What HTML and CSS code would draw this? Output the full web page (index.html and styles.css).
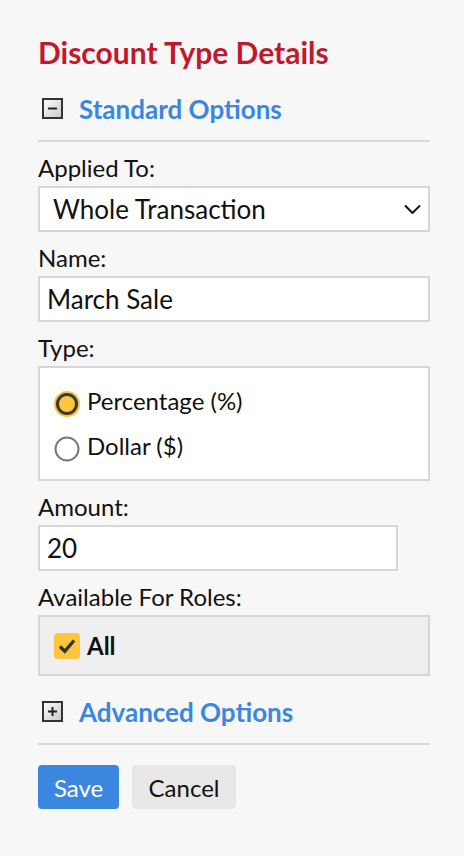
FILE: index.html
```html
<!DOCTYPE html>
<html>
<head>
<meta charset="utf-8">
<link rel="stylesheet" href="styles.css">
</head>
<body>
<div class="page">
  <h1 class="title">Discount Type Details</h1>

  <div class="section-head">
    <svg class="toggle" width="21" height="21" viewBox="0 0 21 21">
      <defs><linearGradient id="g1" x1="0" y1="0" x2="1" y2="1"><stop offset="0" stop-color="#ffffff"/><stop offset="1" stop-color="#c8c8c8"/></linearGradient></defs>
      <rect x="1" y="1" width="19" height="19" fill="url(#g1)" stroke="#333" stroke-width="2"/>
      <rect x="6" y="9.5" width="9" height="2" fill="#222"/>
    </svg>
    <span class="section-title">Standard Options</span>
  </div>
  <div class="rule"></div>

  <div class="label">Applied To:</div>
  <div class="control select">
    <span>Whole Transaction</span>
    <svg class="chev" width="17" height="10" viewBox="0 0 17 10"><path d="M1 1.5 L8.5 9 L16 1.5" fill="none" stroke="#111" stroke-width="2"/></svg>
  </div>

  <div class="label">Name:</div>
  <div class="control input">March Sale</div>

  <div class="label">Type:</div>
  <div class="box radios">
    <div class="opt">
      <svg class="mark" width="26" height="26" viewBox="0 0 26 26"><circle cx="13" cy="13" r="13" fill="#f8c23c"/><circle cx="13" cy="13" r="9.5" fill="#fdc63f" stroke="#3a3a3a" stroke-width="3"/></svg>
      <span>Percentage (%)</span>
    </div>
    <div class="opt">
      <svg class="mark" width="26" height="26" viewBox="0 0 26 26"><circle cx="13" cy="13" r="11.5" fill="#fff" stroke="#767676" stroke-width="2"/></svg>
      <span>Dollar ($)</span>
    </div>
  </div>

  <div class="label">Amount:</div>
  <div class="control input short">20</div>

  <div class="label">Available For Roles:</div>
  <div class="box roles">
    <svg width="26" height="26" viewBox="0 0 26 26"><rect x="0" y="0" width="26" height="26" rx="3.5" fill="#fdc63e"/><path d="M6 13.5 L10.8 18.3 L20 7.5" fill="none" stroke="#333" stroke-width="3.4"/></svg>
    <span class="all">All</span>
  </div>

  <div class="section-head adv">
    <svg class="toggle" width="21" height="21" viewBox="0 0 21 21">
      <defs><linearGradient id="g2" x1="0" y1="0" x2="1" y2="1"><stop offset="0" stop-color="#ffffff"/><stop offset="1" stop-color="#c8c8c8"/></linearGradient></defs>
      <rect x="1" y="1" width="19" height="19" fill="url(#g2)" stroke="#333" stroke-width="2"/>
      <rect x="6" y="9.5" width="9" height="2" fill="#222"/>
      <rect x="9.5" y="6" width="2" height="9" fill="#222"/>
    </svg>
    <span class="section-title">Advanced Options</span>
  </div>
  <div class="rule"></div>

  <div class="buttons">
    <button class="btn save">Save</button>
    <button class="btn cancel">Cancel</button>
  </div>
</div>
</body>
</html>
```

FILE: styles.css
```css
html, body {
  margin: 0;
  padding: 0;
  background: #f7f7f7;
}
body {
  font-family: Lato, "Open Sans", sans-serif;
  color: #111;
}
.page {
  width: 392px;
  padding: 34px 0 40px 38px;
}
.title {
  margin: 0;
  font-size: 30px;
  line-height: 36px;
  font-weight: 700;
  color: #c0192d;
}
.section-head {
  margin-top: 19px;
  height: 40px;
  display: flex;
  align-items: center;
}
.toggle {
  margin-left: 4px;
  margin-right: 16px;
  margin-top: -2px;
  flex: none;
}
.section-title {
  font-size: 26px;
  font-weight: 700;
  color: #3b86de;
  line-height: 40px;
}
.rule {
  height: 2px;
  background: #d9d9d9;
  margin-top: 11px;
}
.label {
  font-size: 24px;
  line-height: 29px;
  margin-top: 11px;
  margin-bottom: 4px;
}
.control {
  box-sizing: border-box;
  height: 46px;
  background: #fff;
  border: 2px solid #d6d6d6;
  font-size: 26px;
  display: flex;
  align-items: center;
}
.select {
  padding-left: 13px;
  padding-right: 7px;
  justify-content: space-between;
}
.input {
  padding-left: 7px;
}
.input.short {
  width: 360px;
}
.box {
  box-sizing: border-box;
  border: 2px solid #d6d6d6;
}
.radios {
  background: #fff;
  padding: 10px 14px 11px;
}
.opt {
  height: 45px;
  display: flex;
  align-items: center;
  gap: 7px;
  font-size: 24px;
}
.mark {
  flex: none;
  margin-top: 6px;
}
.roles {
  background: #efefef;
  height: 61px;
  padding-left: 14px;
  display: flex;
  align-items: center;
  gap: 7px;
}
.all {
  font-size: 24px;
  font-weight: 700;
}
.adv {
  margin-top: 16px;
}
.buttons {
  margin-top: 20px;
  display: flex;
  gap: 13px;
}
.btn {
  font-family: Lato, "Open Sans", sans-serif;
  font-size: 24px;
  height: 44px;
  border: none;
  border-radius: 4px;
  padding: 0;
}
.save {
  background: #3b86de;
  color: #fff;
  width: 81px;
}
.cancel {
  background: #e8e8e8;
  color: #111;
  width: 104px;
}
```
